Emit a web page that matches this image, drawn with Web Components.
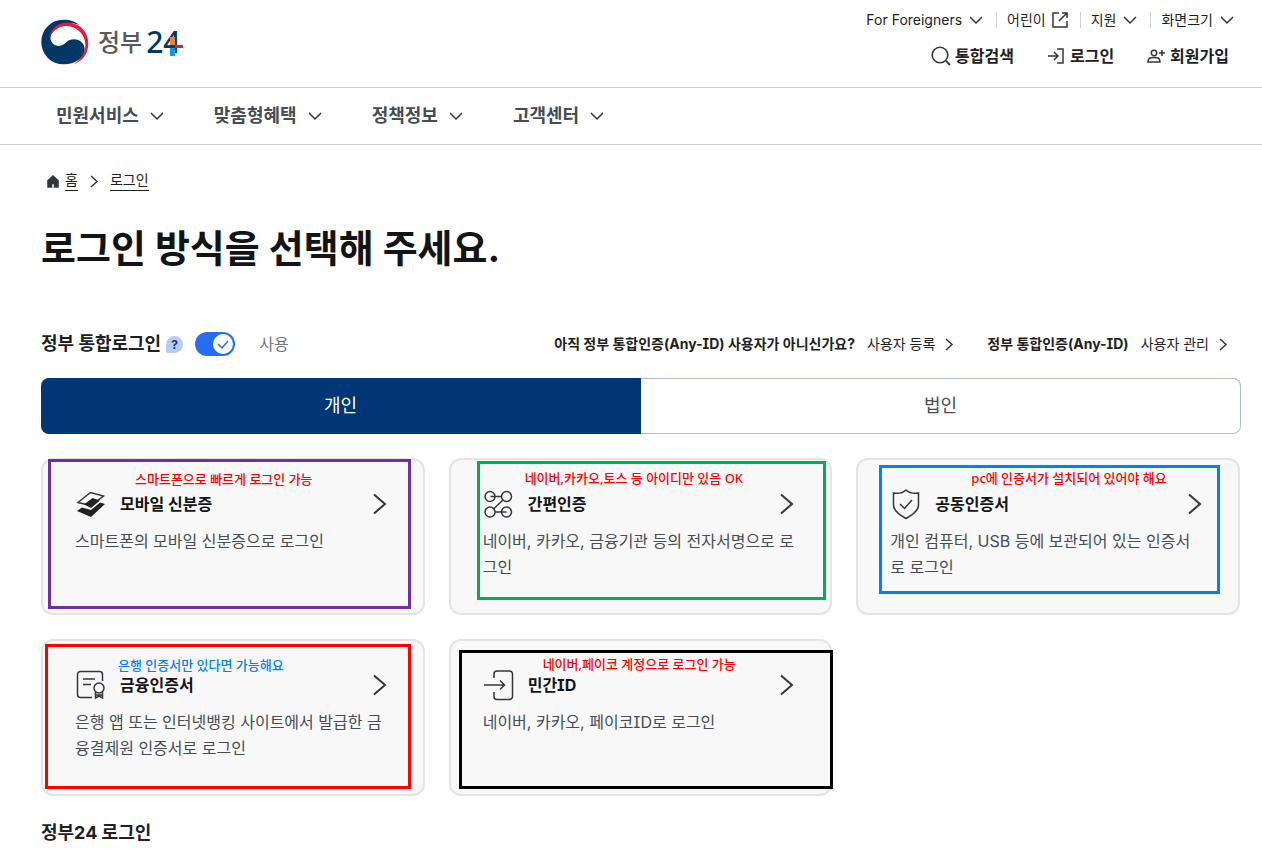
<!DOCTYPE html>
<html lang="ko">
<head>
<meta charset="utf-8">
<meta name="viewport" content="width=device-width, initial-scale=1">
<title>로그인 | 정부24</title>
<style>
  body {
    margin: 0;
    background: #fff;
    color: #1e2124;
    font-family: Inter, "Noto Sans CJK KR", sans-serif;
    font-feature-settings: "cv08";
    font-size: 16px;
    line-height: 24px;
  }
</style>
</head>
<body>
<login-page>
  <site-header slot="header"></site-header>
  <bread-crumb slot="top"></bread-crumb>
  <any-id-bar slot="top"></any-id-bar>
  <type-tabs slot="top"></type-tabs>

  <login-card icon="mobile" heading="모바일 신분증">
    스마트폰의 모바일 신분증으로 로그인
    <card-note slot="note" frame="1px 14px 6px 7px" at="12px 94px" line="#7030a0" ink="#f00">스마트폰으로 빠르게 로그인 가능</card-note>
  </login-card>
  <login-card icon="nodes" heading="간편인증">
    네이버, 카카오, 금융기관 등의 전자서명으로 로그인
    <card-note slot="note" frame="3px 6px 15px 28px" at="11px 76px" line="#00b050" ink="#f00">네이버,카카오,토스 등 아이디만 있음 OK</card-note>
  </login-card>
  <login-card icon="shield" heading="공동인증서">
    개인 컴퓨터, USB 등에 보관되어 있는 인증서로 로그인
    <card-note slot="note" frame="7px 20px 21px 23px" at="11px 115px" line="#0080ff" ink="#f00">pc에 인증서가 설치되어 있어야 해요</card-note>
  </login-card>
  <login-card icon="cert" heading="금융인증서">
    은행 앱 또는 인터넷뱅킹 사이트에서 발급한 금융결제원 인증서로 로그인
    <card-note slot="note" frame="5px 14px 7px 4px" at="17px 77px" line="#f00" ink="#0080ff">은행 인증서만 있다면 가능해요</card-note>
  </login-card>
  <login-card icon="enter" heading="민간ID">
    네이버, 카카오, 페이코ID로 로그인
    <card-note slot="note" frame="11px -1px 7px 10px" at="16px 94px" line="#000" ink="#f00">네이버,페이코 계정으로 로그인 가능</card-note>
  </login-card>

  <h2 slot="bottom" style="margin: 0; font-size: 18px; line-height: 28px; font-weight: 700">정부24 로그인</h2>
</login-page>

<script>
const ICONS = {
  down: [20, '<path d="M4 7l6 6 6-6"/>'],
  right: [20, '<path d="M7 5l6 5.500-6 5.500"/>'],
  next: [24, '<path d="M5 2.500l11 9.500-11 9.500" stroke-width="2"/>'],
  external: [20, '<path d="M9 3H3v14h14v-6M12 3h5v5M17 3l-8 8"/>'],
  search: [20, '<circle cx="9" cy="9" r="7.800" stroke-width="1.600"/><path d="M15 15l4 4" stroke-width="1.800"/>'],
  login: [20, '<path d="M2 10h10M8 6l4 4-4 4M11 3h6v14h-6"/>'],
  join: [20, '<circle cx="8" cy="7" r="2.700"/><path d="M2 16c0-4 2-4.500 6-4.500s6 .5 6 4.500zM16 4v6M13 7h6"/>'],
  home: [16, '<path d="M3 7.500L8 3l5 4.500V14H9.500v-3.500h-3V14H3z" fill="#33363d"/>'],
  mobile: [32, `<path d="M3 14.500L15.500 4.500 28.500 8 16 17.500z" stroke-width="1.500"/>
    <path d="M9 16.500l8.500-6.500 7.500 2.500-9 7.500z" fill="#222" stroke="none"/>
    <path d="M2 23l5-3.500 9 2.500 9-7.500 5 1.500-14 13z" fill="#222" stroke="none"/>`],
  nodes: [32, `<circle cx="7" cy="8.500" r="5"/><circle cx="23.500" cy="8.500" r="5"/>
    <circle cx="7" cy="24" r="5"/><circle cx="23.500" cy="24" r="5"/>
    <path d="M7.500 8.500h11M20 12l-9.500 9M12 24h11.500"/>`],
  shield: [32, '<path d="M16 2c3 3 7 4 12.500 3v12c0 6-6 10-12.500 13.500C9.500 27 3.500 23 3.500 17V5C9 6 13 5 16 2z"/><path d="M10 16l4.500 4.500L22 12"/>'],
  cert: [32, '<path d="M27.500 12V5.500a3 3 0 0 0-3-3h-19a3 3 0 0 0-3 3v20a3 3 0 0 0 3 3H17M8 10h12M8 15.500h8"/><circle cx="24" cy="19" r="5"/><path d="M20.500 23v6l3.500-2 3.500 2v-6M20.500 26h7"/>'],
  enter: [32, '<path d="M1 16h20M17 11.500l4.500 4.500-4.500 4.500M11 9V5a3 3 0 0 1 3-3h12.500a3 3 0 0 1 3 3v22.500a3 3 0 0 1-3 3H14a3 3 0 0 1-3-3V23"/>'],
};

class BaseElement extends HTMLElement {
  constructor() {
    super();
    this.attachShadow({mode: 'open'});
  }

  connectedCallback() {
    const template = document.createElement('template');
    template.innerHTML = this.render();
    this.shadowRoot.replaceChildren(template.content.cloneNode(true));
  }
}

class GovIcon extends BaseElement {
  render() {
    const [size, shape] = ICONS[this.getAttribute('name')];
    return `
      <style>
        :host { display: block; flex: none; width: ${size}px; height: ${size}px; }
        svg { display: block; fill: none; stroke: #33363d; stroke-width: 1.5; }
      </style>
      <svg width="${size}" height="${size}" viewBox="0 0 ${size} ${size}" aria-hidden="true">${shape}</svg>
    `;
  }
}

class LoginPage extends BaseElement {
  render() {
    return `
      <style>
        :host { display: block; }
        main { padding: 25px 21px 10px 41px; }
        .grid {
          display: grid;
          grid-template-columns: repeat(3, 1fr);
          grid-auto-rows: 1fr;
          gap: 24px;
          margin: 24px 1px 23px 0;
        }
      </style>
      <slot name="header"></slot>
      <main>
        <slot name="top"></slot>
        <div class="grid"><slot></slot></div>
        <slot name="bottom"></slot>
      </main>
    `;
  }
}

class GovLogo extends BaseElement {
  render() {
    return `
      <style>
        :host { display: block; }
        a { position: relative; display: flex; align-items: center; gap: 9px; color: #58595b; text-decoration: none; }
        span { display: flex; gap: 4px; font: 500 24px/48px "Noto Sans CJK KR", sans-serif; }
        b { font: 500 30px/50px "Noto Sans", sans-serif; color: #003764; }
        svg { display: block; }
        .cross { position: absolute; left: 129px; top: 20px; }
      </style>
      <a href="#">
        <svg width="48" height="46" viewBox="32 55 144 138" aria-hidden="true">
          <path fill="#003764" d="M33 124A66 66 0 0 1 99 57C120 57 137 63 148 74C115 58 65 75 60 112C62 130 78 140 95 134C108 128 112 116 130 116C150 116 163 130 163 147C163 170 135 191 100 191A66 66 0 0 1 33 124Z"/>
          <path fill="#e8193c" d="M58 112C60 80 90 63 118 66C150 68 174 95 174 128C174 160 155 183 130 191C150 178 165 158 165 133C165 103 143 78 108 76C85 76 65 92 58 112Z"/>
        </svg>
        <span>정부<b>24</b></span>
        <svg class="cross" width="13" height="19" aria-hidden="true">
          <path fill="#f58220" d="M0 0h5v8H0z"/><path fill="#e8193c" d="M5 8h8v3H5z"/>
          <path fill="#003764" d="M0 8h5v3H0z"/><path fill="#00a0e3" d="M0 11h5v8H0z"/>
        </svg>
      </a>
    `;
  }
}

class SiteHeader extends BaseElement {
  render() {
    const util = [['For Foreigners', 'down'], ['어린이', 'external'], ['지원', 'down'], ['화면크기', 'down']];
    const user = [['통합검색', 'search'], ['로그인', 'login'], ['회원가입', 'join']];
    const menu = ['민원서비스', '맞춤형혜택', '정책정보', '고객센터'];
    return `
      <style>
        :host { display: block; }
        header { display: flex; justify-content: space-between; height: 87px; border-bottom: 1px solid #cdd1d5; padding: 0 25px 0 41px; }
        gov-logo { margin-top: 17px; }
        ul { display: flex; margin: 0; padding: 0; list-style: none; }
        a, button { display: flex; align-items: center; border: 0; padding: 0; background: none; font: inherit; color: inherit; text-decoration: none; cursor: pointer; }
        .util { justify-content: flex-end; padding-top: 8px; font-size: 14px; }
        .util button { gap: 4px; }
        .util li { display: flex; align-items: center; }
        .util li + li::before { content: ""; width: 1px; height: 16px; margin: 0 10px; background: #cdd1d5; }
        .user { justify-content: flex-end; gap: 32px; padding: 12px 8px 0 0; font-weight: 700; }
        .user a { gap: 4px; }
        nav { border-bottom: 1px solid #cdd1d5; padding: 14px 56px; }
        nav ul { gap: 47px; }
        nav button { gap: 8px; font-size: 18px; line-height: 28px; font-weight: 700; color: #464c53; }
      </style>
      <header>
        <gov-logo></gov-logo>
        <div>
          <ul class="util">${util.map(([t, i]) => `<li><button type="button">${t}<gov-icon name="${i}"></gov-icon></button></li>`).join('')}</ul>
          <ul class="user">${user.map(([t, i]) => `<li><a href="#"><gov-icon name="${i}"></gov-icon>${t}</a></li>`).join('')}</ul>
        </div>
      </header>
      <nav>
        <ul>${menu.map(t => `<li><button type="button">${t}<gov-icon name="down"></gov-icon></button></li>`).join('')}</ul>
      </nav>
    `;
  }
}

class BreadCrumb extends BaseElement {
  render() {
    return `
      <style>
        :host { display: block; }
        nav { display: flex; align-items: center; gap: 6px; padding-left: 4px; font-size: 14px; }
        .home { display: flex; align-items: center; gap: 4px; }
        a { color: #1e2124; text-decoration: none; }
        a span { display: block; line-height: 20px; border-bottom: 1px solid #1e2124; }
        h1 { margin: 29px 0 0; font-size: 38px; line-height: 56px; font-weight: 700; color: #131416; }
      </style>
      <nav aria-label="현재 위치">
        <a class="home" href="#"><gov-icon name="home"></gov-icon><span>홈</span></a>
        <gov-icon name="right"></gov-icon>
        <a href="#"><span>로그인</span></a>
      </nav>
      <h1>로그인 방식을 선택해 주세요.</h1>
    `;
  }
}

class AnyIdBar extends BaseElement {
  render() {
    return `
      <style>
        :host { display: flex; align-items: center; justify-content: space-between; margin-top: 54px; padding-right: 8px; }
        .left, .right, a { display: flex; align-items: center; }
        h2 { margin: 0; font-size: 18px; line-height: 28px; font-weight: 700; }
        .help { border: 0; margin: 0 12px 0 5px; padding: 0; width: 17px; height: 17px; border-radius: 9px 9px 9px 2px; background: #b1cefb; font: 700 12px/17px Inter, sans-serif; color: #33363d; }
        .switch { position: relative; display: flex; margin-right: 24px; }
        input { appearance: none; display: flex; margin: 0; width: 40px; height: 24px; border-radius: 12px; padding: 2px; box-sizing: border-box; background: #256ef4; }
        input::before { content: ""; width: 20px; height: 20px; margin-left: auto; border-radius: 50%; background: #fff; }
        .tick { position: absolute; right: 2px; top: 2px; fill: none; stroke: #256ef4; stroke-width: 1.5; pointer-events: none; }
        label { color: #6d7882; }
        .right { gap: 28px; font-size: 14px; }
        a { gap: 12px; color: #1e2124; text-decoration: none; }
        a span { display: flex; align-items: center; gap: 4px; }
      </style>
      <div class="left">
        <h2>정부 통합로그인</h2>
        <button class="help" type="button">?</button>
        <div class="switch">
          <input id="use" type="checkbox" role="switch" checked>
          <svg class="tick" width="20" height="20" aria-hidden="true"><path d="M5 10l4 4 6-7"/></svg>
        </div>
        <label for="use">사용</label>
      </div>
      <div class="right">
        <a href="#"><b>아직 정부 통합인증(Any-ID) 사용자가 아니신가요?</b><span>사용자 등록<gov-icon name="right"></gov-icon></span></a>
        <a href="#"><b>정부 통합인증(Any-ID)</b><span>사용자 관리<gov-icon name="right"></gov-icon></span></a>
      </div>
    `;
  }
}

class TypeTabs extends BaseElement {
  render() {
    return `
      <style>
        :host { display: flex; margin-top: 20px; }
        button { flex: 1; height: 56px; border: 1px solid #b1bdd0; border-left: 0; border-radius: 0 8px 8px 0; background: #fff; font: inherit; font-size: 18px; color: #464c53; }
        button[aria-selected=true] { border-color: #003675; border-radius: 8px 0 0 8px; background: #003675; color: #fff; }
      </style>
      <button type="button" role="tab" aria-selected="true">개인</button>
      <button type="button" role="tab" aria-selected="false">법인</button>
    `;
  }
}

class LoginCard extends BaseElement {
  render() {
    return `
      <style>
        :host { display: block; position: relative; }
        a {
          display: block;
          box-sizing: border-box;
          height: 100%;
          border: 2px solid #e4e4e4;
          border-radius: 12px;
          padding: 28px 30px 33px 32px;
          background: #f8f8f8;
          color: #464c53;
          line-height: 26px;
          text-decoration: none;
        }
        .head { display: flex; align-items: center; gap: 13px; margin-bottom: 8px; }
        .desc { padding-right: 4px; }
        h3 { flex: 1; margin: 0; font-size: 16px; line-height: 24px; font-weight: 700; color: #131416; }
      </style>
      <a href="#">
        <div class="head">
          <gov-icon name="${this.getAttribute('icon')}"></gov-icon>
          <h3>${this.getAttribute('heading')}</h3>
          <gov-icon name="next"></gov-icon>
        </div>
        <div class="desc"><slot></slot></div>
      </a>
      <slot name="note"></slot>
    `;
  }
}

// hand-drawn style callout laid over a card: a frame and a line of text
class CardNote extends BaseElement {
  render() {
    const [top, left] = this.getAttribute('at').split(' ');
    return `
      <style>
        :host { position: absolute; inset: 0; pointer-events: none; }
        .frame { position: absolute; inset: ${this.getAttribute('frame')}; border: 3px solid ${this.getAttribute('line')}; }
        .text {
          position: absolute;
          top: ${top};
          left: ${left};
          font: 500 13px/18px "Noto Sans", "Noto Sans CJK KR", sans-serif;
          color: ${this.getAttribute('ink')};
          white-space: nowrap;
        }
      </style>
      <div class="frame"></div>
      <div class="text"><slot></slot></div>
    `;
  }
}

customElements.define('gov-icon', GovIcon);
customElements.define('gov-logo', GovLogo);
customElements.define('site-header', SiteHeader);
customElements.define('bread-crumb', BreadCrumb);
customElements.define('any-id-bar', AnyIdBar);
customElements.define('type-tabs', TypeTabs);
customElements.define('login-card', LoginCard);
customElements.define('card-note', CardNote);
customElements.define('login-page', LoginPage);
</script>
</body>
</html>
